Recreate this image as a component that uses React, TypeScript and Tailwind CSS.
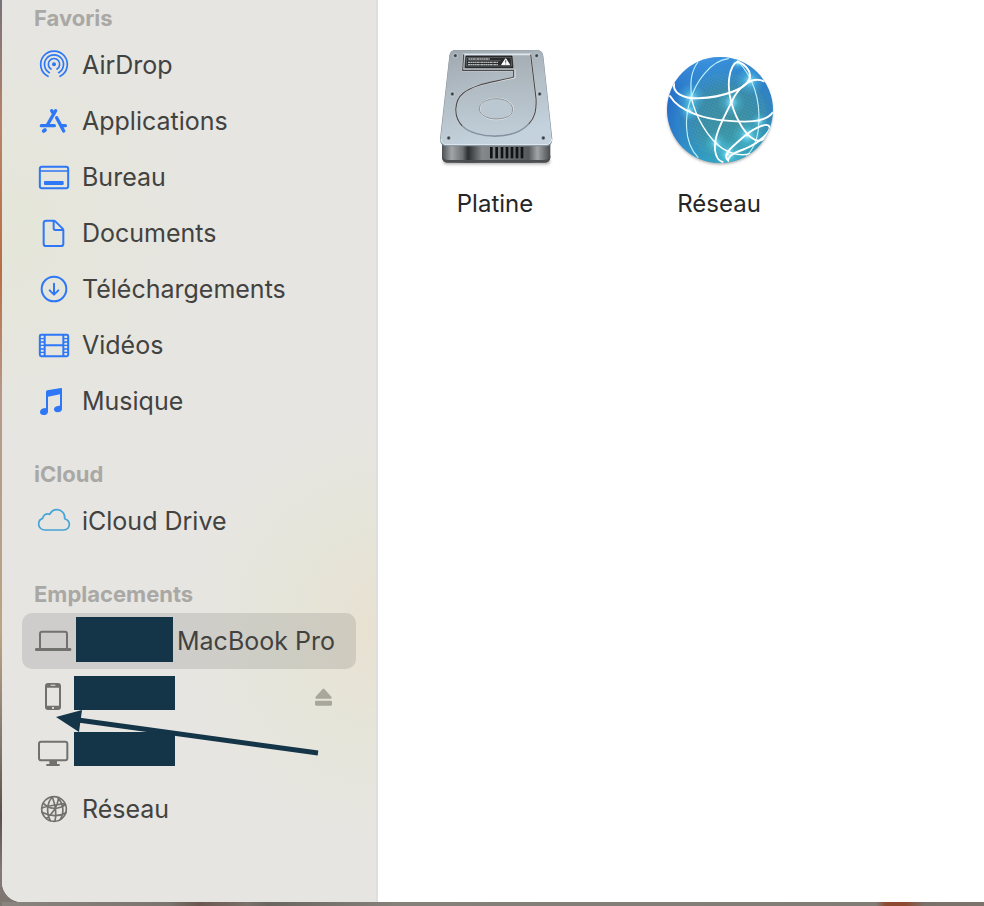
import React, { useState } from "react";

function Icon({ className = "", children }: { className?: string; children: React.ReactNode }) {
    return (
        <svg
            viewBox="0 0 108 108"
            className={`size-9 shrink-0 overflow-visible ${className}`}
            fill="none"
            stroke="currentColor"
            strokeWidth={6}
            strokeLinecap="round"
            strokeLinejoin="round"
            aria-hidden="true"
        >
            {children}
        </svg>
    );
}

const icons: Record<string, React.ReactNode> = {
    airdrop: (
        <>
            <path d="M36 88A40 40 0 1 1 72 88" strokeWidth={5} />
            <path d="M40 77A28.500 28.500 0 1 1 68 77" strokeWidth={5} />
            <path d="M45 66A17 17 0 1 1 63 66" strokeWidth={5} />
            <circle cx="54" cy="52" r="6" fill="currentColor" stroke="none" />
        </>
    ),
    applications: (
        <g strokeWidth={10}>
            <path d="M59 23L34 66M16 68H55M47 23L51 30M62 44L83 84M76 68H88" />
            <path d="M27 81L23 84" strokeWidth={11} />
        </g>
    ),
    bureau: (
        <>
            <rect x="11.500" y="23.500" width="85" height="64" rx="6" />
            <path d="M12 36H96" strokeWidth={5} />
            <rect x="24" y="66" width="59" height="12" rx="3" fill="currentColor" stroke="none" />
        </>
    ),
    documents: (
        <>
            <path d="M31 17H54Q56 17 58 19L80 41Q82 43 82 46V86Q82 93 75 93H30Q23 93 23 86V24Q23 17 31 17Z" />
            <path d="M53 18V40Q53 45 58 45H81" />
        </>
    ),
    downloads: (
        <>
            <circle cx="54" cy="54" r="37" />
            <path d="M54 38V70M41 58L54 71L67 58" />
        </>
    ),
    videos: (
        <>
            <rect x="11.500" y="23.500" width="85" height="64" rx="4" />
            <path d="M26 24V87M82 24V87M26 55H82" />
            <path d="M12 35H25M12 45H25M12 55H25M12 66H25M12 76H25M83 35H96M83 45H96M83 55H96M83 66H96M83 76H96" strokeWidth={4} />
        </>
    ),
    music: (
        <g fill="currentColor" stroke="none">
            <path d="M30 27Q30 23 34 22L75 15Q78 14 78 18V76H72V34L36 41V84H30Z" />
            <path d="M36 75V86Q35 96 22 96Q12 95 12 87Q12 79 23 76Z" />
            <path d="M78 67V78Q77 88 64 88Q54 87 54 79Q54 71 65 69Z" />
        </g>
    ),
    cloud: (
        <path
            strokeWidth={5}
            d="M27 81C16 81 8 73 8 63C8 54 13 48 20 46C22 35 31 30 41 34C46 25 53 20 62 20C77 20 88 32 86 47C95 50 100 56 100 64C100 74 93 81 83 81Z"
        />
    ),
    laptop: (
        <>
            <rect x="12" y="26" width="81" height="53" rx="6" />
            <rect x="-3" y="75" width="109" height="9" rx="4" fill="currentColor" stroke="none" />
        </>
    ),
    phone: (
        <path
            fillRule="evenodd"
            fill="currentColor"
            stroke="none"
            d="M36 12H66Q75 12 75 21V84Q75 93 66 93H36Q27 93 27 84V21Q27 12 36 12ZM33 26V80H69V26ZM44 17V20H58V17ZM48 84V89H54V84Z"
        />
    ),
    display: (
        <>
            <rect x="9" y="20" width="85" height="56" rx="6" />
            <path d="M40 78H63V87H71V93H31V87H40Z" fill="currentColor" stroke="none" />
        </>
    ),
    network: (
        <g strokeWidth={5}>
            <circle cx="54" cy="54" r="37" />
            <path d="M49 18C33 35 30 65 43 89M49 18C56 37 63 66 57 90M68 20C65 42 56 64 31 82M65 20C82 37 86 65 73 85" />
            <path d="M22 37C38 54 66 58 88 41M18 64C40 76 68 78 90 65M18 51C30 44 58 43 86 38" />
        </g>
    ),
};

const favorites = [
    { label: "AirDrop", icon: "airdrop" },
    { label: "Applications", icon: "applications" },
    { label: "Bureau", icon: "bureau" },
    { label: "Documents", icon: "documents" },
    { label: "Téléchargements", icon: "downloads" },
    { label: "Vidéos", icon: "videos" },
    { label: "Musique", icon: "music" },
];

const screws = [[106, 62], [350, 62], [97, 177], [359, 177], [86, 309], [370, 309]];

function HardDrive() {
    return (
        <svg viewBox="33 33 384 384" className="size-32" aria-hidden="true">
            <defs>
                <linearGradient id="lid" x1="0" y1="0" x2="0.3" y2="1">
                    <stop offset="0" stopColor="#a0a8af" />
                    <stop offset="0.5" stopColor="#b3bec6" />
                    <stop offset="1" stopColor="#c3d2dd" />
                </linearGradient>
                <linearGradient id="body" x1="0" x2="1">
                    <stop offset="0" stopColor="#4d5052" />
                    <stop offset="0.09" stopColor="#a2a5a7" />
                    <stop offset="0.19" stopColor="#6e7173" />
                    <stop offset="0.24" stopColor="#2c2e30" />
                    <stop offset="0.37" stopColor="#85898c" />
                    <stop offset="0.8" stopColor="#565a5c" />
                    <stop offset="0.88" stopColor="#a2a5a7" />
                    <stop offset="1" stopColor="#494c4e" />
                </linearGradient>
                <linearGradient id="plate" x1="0" y1="0" x2="0" y2="1">
                    <stop offset="0" stopColor="#a6aeb4" />
                    <stop offset="1" stopColor="#c0ced8" />
                </linearGradient>
                <filter id="soft" x="-10%" y="-100%" width="120%" height="300%">
                    <feGaussianBlur stdDeviation="4" />
                </filter>
            </defs>
            <rect x="70" y="370" width="320" height="18" rx="9" fill="#777" opacity="0.6" filter="url(#soft)" />
            <path d="M66 318H391V366Q391 383 372 383H85Q66 383 66 366Z" fill="url(#body)" />
            <path d="M66 360Q68 375 87 375H370Q389 375 391 360V368Q389 383 372 383H85Q68 383 66 368Z" fill="#4b4e50" />
            <g fill="#111315">
                {[210, 226, 242, 257, 272, 287, 302].map((x) => (
                    <rect key={x} x={x} y="336" width="8" height="34" />
                ))}
            </g>
            <path d="M107 45H350Q367 45 370 62L397 312Q397 333 380 334H78Q60 333 60 312L88 62Q90 45 107 45Z" fill="#7f8b93" />
            <path d="M107 46H350Q366 46 369 62L395 309Q395 328 378 329H80Q62 328 62 309L89 62Q91 46 107 46Z" fill="url(#lid)" />
            <path d="M63 312Q64 329 80 329H378Q395 328 395 311" fill="none" stroke="#e4eef5" strokeWidth="3" />
            <path
                d="M131 58L128 106H284V127C230 142 165 145 130 174C102 197 99 245 127 273C167 312 280 317 326 267C345 247 350 225 348 190L332 58Z"
                fill="url(#plate)"
                stroke="#dfe8ee"
                strokeWidth="5"
            />
            <path
                d="M131 58L128 106H281V126C230 141 165 145 130 174C102 197 99 245 127 273M332 58L348 190C350 225 345 247 326 267"
                fill="none"
                stroke="#504a4b"
                strokeWidth="3.5"
            />
            <path d="M127 273C167 312 280 317 326 267" fill="none" stroke="#8494a2" strokeWidth="5" />
            <ellipse cx="229" cy="222" rx="50" ry="32" fill="#bcc8d1" stroke="#e7eff4" strokeWidth="4" />
            <path d="M180 230C170 203 207 190 232 191C262 192 285 210 276 233C265 257 195 261 180 230" fill="none" stroke="#606467" strokeWidth="2" />
            <path d="M138 63H276L279 98H135Z" fill="#292b2d" stroke="#111" strokeWidth="2" />
            <path d="M140 67H273L275 93H139Z" fill="none" stroke="#8c9093" strokeWidth="1.500" />
            <path d="M145 72H210M144 82H235M144 89H235" stroke="#b6babd" strokeWidth="4" strokeDasharray="7 1 4 1" />
            <path d="M145 77H242" stroke="#85898b" strokeWidth="1.500" />
            <path d="M257 71L269 89H245Z" fill="#fff" stroke="#fff" strokeWidth="3" strokeLinejoin="round" />
            <path d="M257 76V83M257 86V88" stroke="#222" strokeWidth="2.500" />
            {screws.map(([x, y]) => (
                <g key={`${x}-${y}`}>
                    <circle cx={x} cy={y} r="7" fill="#7f8991" stroke="#dde7ed" strokeWidth="1.5" />
                    <circle cx={x} cy={y} r="3.500" fill="#34393d" />
                </g>
            ))}
        </svg>
    );
}

const glows = [[124, 173, 44], [244, 187, 42], [300, 122, 44], [292, 286, 46], [235, 343, 44], [264, 70, 20], [198, 310, 34], [328, 244, 26], [118, 212, 32]];

function Globe() {
    return (
        <svg viewBox="15 18 384 384" className="size-32" aria-hidden="true">
            <defs>
                <radialGradient id="sea" cx="0.58" cy="0.6" r="0.64">
                    <stop offset="0" stopColor="#3b8b9c" />
                    <stop offset="0.45" stopColor="#3788a6" />
                    <stop offset="0.75" stopColor="#2e80c9" />
                    <stop offset="1" stopColor="#2565c9" />
                </radialGradient>
                <radialGradient id="glow">
                    <stop offset="0" stopColor="#e4ffff" />
                    <stop offset="0.2" stopColor="#79e0ff" stopOpacity="0.7" />
                    <stop offset="0.5" stopColor="#5ed3ee" stopOpacity="0.3" />
                    <stop offset="1" stopColor="#52cfee" stopOpacity="0" />
                </radialGradient>
                <linearGradient id="shine" x1="0.3" y1="0" x2="0.5" y2="1">
                    <stop offset="0" stopColor="#52b9f5" stopOpacity="0.6" />
                    <stop offset="0.35" stopColor="#2e8fcc" stopOpacity="0" />
                    <stop offset="0.7" stopColor="#33c4c6" stopOpacity="0.1" />
                    <stop offset="1" stopColor="#37c4c8" stopOpacity="0.5" />
                </linearGradient>
                <pattern id="mesh" width="9" height="9" patternUnits="userSpaceOnUse" patternTransform="rotate(24)">
                    <path d="M0 0H9M0 0V9" stroke="#9be4e6" strokeWidth="1" opacity="0.35" />
                </pattern>
                <clipPath id="sphere">
                    <circle cx="210" cy="210" r="159" />
                </clipPath>
                <filter id="shade" x="-10%" y="-10%" width="120%" height="120%">
                    <feGaussianBlur stdDeviation="5" />
                </filter>
            </defs>
            <circle cx="210" cy="216" r="157" fill="#555" opacity="0.55" filter="url(#shade)" />
            <circle cx="210" cy="210" r="159" fill="url(#sea)" />
            <circle cx="210" cy="210" r="159" fill="url(#shine)" />
            <g clipPath="url(#sphere)">
                <circle cx="225" cy="225" r="125" fill="url(#mesh)" />
                {glows.map(([x, y, r]) => (
                    <circle key={`${x}-${y}`} cx={x} cy={y} r={r} fill="url(#glow)" />
                ))}
                <g fill="none" stroke="#fff" strokeLinecap="round">
                    <g strokeWidth="3.5" stroke="#bdf1fc">
                        <path d="M144 66C115 105 124 146 124 173C105 220 98 305 144 352" />
                        <path d="M235 56C180 62 136 130 124 173" />
                        <path d="M264 64C309 110 332 180 326 254C324 300 306 335 289 346" />
                    </g>
                    <path d="M72 132C68 157 95 175 145 175C210 173 302 148 300 105C298 84 282 73 264 64" strokeWidth="6" />
                    <path d="M60 168C88 216 170 238 230 242C285 247 343 249 368 218" strokeWidth="5.5" />
                    <path d="M264 64C235 76 230 140 244 187C258 239 292 300 326 302C340 302 350 292 358 278" strokeWidth="5.5" />
                    <path d="M342 124C302 105 262 148 244 187C220 237 191 285 195 330C198 353 207 363 218 366" strokeWidth="5.5" />
                    <path d="M124 173C137 232 174 295 217 325C247 344 275 348 302 341" strokeWidth="4" />
                    <path d="M234 361C218 345 240 326 270 300C305 266 349 246 358 259C366 273 326 310 286 326C259 336 236 344 234 361Z" strokeWidth="6" />
                </g>
            </g>
        </svg>
    );
}

function Heading({ children }: { children: React.ReactNode }) {
    return (
        <h2 className="flex h-9 items-center pb-[2px] pl-3 text-[22px] leading-7 font-bold text-[#a9a8a4]">
            {children}
        </h2>
    );
}

function Row({ label, icon, tint = "text-[#2e77f6]" }: { label: string; icon: string; tint?: string }) {
    return (
        <li>
            <button type="button" className="flex h-14 w-full items-center gap-[10px] rounded-[10px] pl-[14px] text-left">
                <Icon className={tint}>{icons[icon]}</Icon>
                {label}
            </button>
        </li>
    );
}

export default function App() {
    const [selected, setSelected] = useState("Platine");

    return (
        <div className="min-h-screen flex flex-col bg-[linear-gradient(to_bottom,#77727a_0,#b98268_14%,#b96d43_30%,#b6998b_44%,#bda283_70%,#817870_82%,#5b504b_90%,#807974_96%,#7d7671_100%)] pl-[2px] font-[Inter,'Liberation_Sans',sans-serif]">
            <div className="flex flex-1 overflow-hidden rounded-bl-[20px] bg-white">
                <aside className="w-[376px] shrink-0 border-r-2 border-[#dfdfe0] bg-[#e6e5e2] bg-[radial-gradient(circle_at_105%_630px,#e8e0cf_0,#e6e5da_110px,transparent_230px),radial-gradient(circle_at_0_230px,#e5e6d9_0,transparent_230px)] pt-px pl-5 pr-5">
                    <nav className="text-[25px] leading-8 text-[#424240]">
                        <section>
                            <Heading>Favoris</Heading>
                            <ul>
                                {favorites.map((item) => (
                                    <Row key={item.label} label={item.label} icon={item.icon} />
                                ))}
                            </ul>
                        </section>

                        <section className="mt-7">
                            <Heading>iCloud</Heading>
                            <ul>
                                <Row label="iCloud Drive" icon="cloud" tint="text-[#45a3d5]" />
                            </ul>
                        </section>

                        <section className="mt-7">
                            <Heading>Emplacements</Heading>
                            <ul className="relative">
                                <li>
                                    <button type="button" className="flex h-14 w-full items-center gap-1 rounded-[10px] bg-black/10 pl-[14px] text-left">
                                        <Icon className="text-[#71716d]">{icons.laptop}</Icon>
                                        <span className="mb-1 h-[45px] w-[97px] shrink-0 bg-[#143548]" />
                                        <span className="whitespace-nowrap">MacBook Pro</span>
                                    </button>
                                </li>
                                <li className="flex items-center">
                                    <button type="button" aria-label="iPhone" className="flex h-14 flex-1 items-center gap-[2px] pl-[14px]">
                                        <Icon className="text-[#71716d]">{icons.phone}</Icon>
                                        <span className="mb-2 h-[34px] w-[101px] bg-[#143548]" />
                                    </button>
                                    <button type="button" aria-label="Éjecter" className="mr-6 text-[#a9a69b]">
                                        <svg viewBox="0 0 51 54" className="h-[18px] w-[17px]" fill="currentColor" aria-hidden="true">
                                            <path d="M23 3Q25.500 0 28 3L49 26Q52 31 47 32H4Q-1 31 2 26Z" />
                                            <rect y="38" width="51" height="15" rx="4" />
                                        </svg>
                                    </button>
                                </li>
                                <li>
                                    <button type="button" aria-label="Mac" className="flex h-14 w-full items-center gap-[2px] pl-[14px]">
                                        <Icon className="text-[#71716d]">{icons.display}</Icon>
                                        <span className="mb-2 h-[34px] w-[101px] bg-[#143548]" />
                                    </button>
                                </li>
                                <Row label="Réseau" icon="network" tint="text-[#71716d]" />
                                {/* Flèche vers le téléphone */}
                                <svg
                                    viewBox="0 0 264 48"
                                    className="pointer-events-none absolute top-24 left-[34px] h-12 w-[264px]"
                                    aria-hidden="true"
                                >
                                    <path d="M22 11L262 44" stroke="#143548" strokeWidth="5" />
                                    <path d="M0 8L26 1L23 23Z" fill="#143548" />
                                </svg>
                            </ul>
                        </section>
                    </nav>
                </aside>

                <main className="flex flex-1 flex-wrap content-start pt-[46px] pl-[5px]">
                    {[
                        { name: "Platine", art: <HardDrive /> },
                        { name: "Réseau", art: <Globe /> },
                    ].map((item) => (
                        <button
                            key={item.name}
                            type="button"
                            aria-pressed={selected === item.name}
                            onClick={() => setSelected(item.name)}
                            className="flex w-56 flex-col items-center gap-[14px] text-[24px] leading-8 text-[#262626]"
                        >
                            {item.art}
                            {item.name}
                        </button>
                    ))}
                </main>
            </div>
            {/* Bord du fond d'écran sous la fenêtre */}
            <div className="h-1 bg-[linear-gradient(to_right,#8a847e_0,#7a736e_17%,#6a5850_20%,#7b706a_25%,#6b6560_27%,#86807b_40%,#827c77_89%,#8d4a30_90%,#8d4a30_92%,#7b716b_94%,#7d736d_100%)]" />
        </div>
    );
}
